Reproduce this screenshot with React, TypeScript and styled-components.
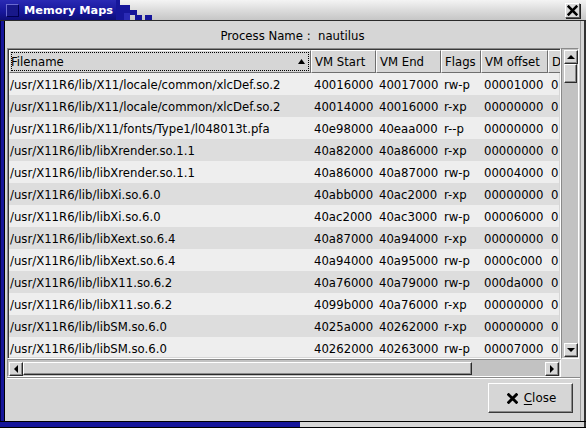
import React from "react";
import styled, { createGlobalStyle } from "styled-components";

const Global = createGlobalStyle`
  html, body { margin: 0; padding: 0; background: #d6d6d6; }
  body { font-family: "DejaVu Sans", "Noto Sans", sans-serif; font-size: 11.7px; color: #000; }
  * { box-sizing: border-box; }
`;

const BLUE = "#16169a";

const Window = styled.div`
  width: 586px;
  height: 428px;
  display: flex;
  flex-direction: column;
  overflow: hidden;
  background: #d6d6d6;
`;

const TitleBar = styled.div`
  height: 21px;
  flex: none;
  display: flex;
  align-items: stretch;
  background: linear-gradient(#f4f4f4, #dcdcdc 50%, #c6c6c6);
  border-bottom: 1px solid #2a2a2a;
`;

const TitleTab = styled.div`
  width: 116px;
  display: flex;
  align-items: center;
  gap: 5px;
  padding-left: 6px;
  background: linear-gradient(#2a2ab4, ${BLUE} 60%, #0e0e78);
`;

const WinIcon = styled.div`
  width: 13px;
  height: 13px;
  background: #18188a;
  border: 1px solid #6a6ad0;
  border-right-color: #000050;
  border-bottom-color: #000050;
`;

const TitleText = styled.span`
  color: #fff;
  font-weight: bold;
  font-size: 11.3px;
  white-space: nowrap;
`;

const Steps = styled.svg`
  flex: none;
  display: block;
`;

const CloseBox = styled.div`
  margin-left: auto;
  margin-right: 6px;
  margin-top: 3px;
  width: 15px;
  height: 15px;
  display: flex;
  align-items: center;
  justify-content: center;
  background: #dadada;
  border: 1px solid;
  border-color: #fff #555 #555 #fff;
  box-shadow: 1px 1px 0 #222;
`;

const Middle = styled.div`
  flex: 1;
  display: flex;
  min-height: 0;
`;

const LeftEdge = styled.div`
  width: 5px;
  background: ${BLUE};
  border-left: 1px solid #000040;
  border-right: 1px solid #000;
`;

const RightEdge = styled.div`
  width: 6px;
  background: #d6d6d6;
  border-left: 1px solid #9a9a9a;
  border-right: 2px solid #333;
`;

const BottomEdge = styled.div`
  height: 7px;
  flex: none;
  display: flex;
  border-top: 1px solid #000;
  border-bottom: 1px solid #000;
`;

const BottomBlue = styled.div`
  width: 300px;
  background: ${BLUE};
`;

const BottomGray = styled.div`
  flex: 1;
  background: #d6d6d6;
  border-right: 2px solid #333;
`;

const Content = styled.div`
  flex: 1;
  display: flex;
  flex-direction: column;
`;

const ProcessLine = styled.div`
  height: 27px;
  flex: none;
  display: flex;
  align-items: center;
  justify-content: center;
  padding-top: 3px;
  white-space: pre;
`;

const Scrolled = styled.div`
  margin-left: 2px;
  display: grid;
  grid-template-columns: 554px 18px;
  grid-template-rows: 311px 18px;
`;

const TreeFrame = styled.div`
  border: 1px solid;
  border-color: #8a8a8a #fff #fff #8a8a8a;
  box-shadow: inset 1px 1px 0 #3a3a3a, inset -1px -1px 0 #d6d6d6;
  padding: 1px;
  overflow: hidden;
  display: flex;
  flex-direction: column;
`;

const COLS = "302px 65px 65px 40px 67px 13px";

const HeaderRow = styled.div`
  display: grid;
  grid-template-columns: ${COLS};
  height: 23px;
  flex: none;
`;

const HeaderCell = styled.div<{ $first?: boolean }>`
  position: relative;
  display: flex;
  align-items: center;
  padding-left: ${(p) => (p.$first ? "1px" : "3px")};
  padding-right: 5px;
  background: #d6d6d6;
  border-top: 1px solid #fff;
  border-left: 1px solid #fff;
  border-right: 1px solid #6e6e6e;
  border-bottom: 1px solid #6e6e6e;
  white-space: nowrap;
  overflow: hidden;
`;

const FocusRect = styled.div`
  position: absolute;
  inset: 1px 1px 1px 1px;
  border: 1px dotted #000;
  pointer-events: none;
`;

const SortArrow = styled.svg`
  margin-left: auto;
  flex: none;
`;

const Rows = styled.div`
  flex: 1;
  overflow: hidden;
`;

const Row = styled.div<{ $odd: boolean }>`
  display: grid;
  grid-template-columns: ${COLS};
  height: 22px;
  padding-top: 2px;
  align-items: center;
  background: ${(p) => (p.$odd ? "#eeeeee" : "#dddddd")};
`;

const Cell = styled.div<{ $first?: boolean }>`
  padding-left: ${(p) => (p.$first ? "1px" : "3px")};
  white-space: nowrap;
  overflow: hidden;
`;

const VScroll = styled.div`
  display: flex;
  flex-direction: column;
  background: #c2c2c2;
  border: 1px solid;
  border-color: #8a8a8a #fff #fff #8a8a8a;
  padding: 1px 1px 1px 2px;
`;

const HScroll = styled.div`
  display: flex;
  background: #c2c2c2;
  border: 1px solid;
  border-color: #8a8a8a #fff #fff #8a8a8a;
  padding: 2px 1px 1px 1px;
`;

const ArrowBox = styled.div`
  width: 14px;
  height: 14px;
  flex: none;
  display: flex;
  align-items: center;
  justify-content: center;
  background: #d6d6d6;
  border: 1px solid;
  border-color: #fff #2a2a2a #2a2a2a #fff;
  box-shadow: inset -1px -1px 0 #8a8a8a;
`;

const VThumb = styled.div`
  height: 19px;
  flex: none;
  background: #d6d6d6;
  border: 1px solid;
  border-color: #fff #2a2a2a #2a2a2a #fff;
  box-shadow: inset -1px -1px 0 #8a8a8a;
`;

const HThumb = styled.div`
  width: 449px;
  flex: none;
  background: #d6d6d6;
  border: 1px solid;
  border-color: #fff #2a2a2a #2a2a2a #fff;
  box-shadow: inset -1px -1px 0 #8a8a8a;
`;

const Spacer = styled.div`
  flex: 1;
`;

const Corner = styled.div`
  background: #d6d6d6;
`;

const Separator = styled.div`
  margin-left: 2px;
  width: 573px;
  height: 2px;
  flex: none;
  border-top: 1px solid #8a8a8a;
  border-bottom: 1px solid #fff;
`;

const ButtonRow = styled.div`
  display: flex;
  justify-content: flex-end;
  padding: 4px 7px 0 0;
`;

const Button = styled.button`
  width: 85px;
  height: 30px;
  display: flex;
  align-items: center;
  justify-content: center;
  gap: 6px;
  padding: 0 0 0 2px;
  font: inherit;
  font-size: 11.9px;
  color: #000;
  background: #d6d6d6;
  border: 1px solid;
  border-color: #fff #3a3a3a #3a3a3a #fff;
  box-shadow: inset -1px -1px 0 #8a8a8a;
`;

const Mnemonic = styled.span`
  text-decoration: underline;
  text-underline-offset: 2px;
`;

type MapRow = [string, string, string, string, string];

const DATA: MapRow[] = [
  ["/usr/X11R6/lib/X11/locale/common/xlcDef.so.2", "40016000", "40017000", "rw-p", "00001000"],
  ["/usr/X11R6/lib/X11/locale/common/xlcDef.so.2", "40014000", "40016000", "r-xp", "00000000"],
  ["/usr/X11R6/lib/X11/fonts/Type1/l048013t.pfa", "40e98000", "40eaa000", "r--p", "00000000"],
  ["/usr/X11R6/lib/libXrender.so.1.1", "40a82000", "40a86000", "r-xp", "00000000"],
  ["/usr/X11R6/lib/libXrender.so.1.1", "40a86000", "40a87000", "rw-p", "00004000"],
  ["/usr/X11R6/lib/libXi.so.6.0", "40abb000", "40ac2000", "r-xp", "00000000"],
  ["/usr/X11R6/lib/libXi.so.6.0", "40ac2000", "40ac3000", "rw-p", "00006000"],
  ["/usr/X11R6/lib/libXext.so.6.4", "40a87000", "40a94000", "r-xp", "00000000"],
  ["/usr/X11R6/lib/libXext.so.6.4", "40a94000", "40a95000", "rw-p", "0000c000"],
  ["/usr/X11R6/lib/libX11.so.6.2", "40a76000", "40a79000", "rw-p", "000da000"],
  ["/usr/X11R6/lib/libX11.so.6.2", "4099b000", "40a76000", "r-xp", "00000000"],
  ["/usr/X11R6/lib/libSM.so.6.0", "4025a000", "40262000", "r-xp", "00000000"],
  ["/usr/X11R6/lib/libSM.so.6.0", "40262000", "40263000", "rw-p", "00007000"],
];

const Tri = ({ dir }: { dir: "up" | "down" | "left" | "right" }) => {
  const pts = {
    up: "0,5 4,1 8,5",
    down: "0,1 8,1 4,5",
    left: "5,0 5,8 1,4",
    right: "1,0 1,8 5,4",
  }[dir];
  const w = dir === "up" || dir === "down" ? 8 : 6;
  const h = dir === "up" || dir === "down" ? 6 : 8;
  return (
    <svg width={w} height={h} viewBox={`0 0 ${w} ${h}`}>
      <polygon points={pts} fill="#000" />
    </svg>
  );
};

const XIcon = ({ size, stroke }: { size: number; stroke: number }) => (
  <svg width={size} height={size} viewBox="0 0 10 10">
    <path d="M1.5 1.5 L8.5 8.5 M8.5 1.5 L1.5 8.5" stroke="#000" strokeWidth={stroke} strokeLinecap="square" />
  </svg>
);

export default function App() {
  return (
    <>
      <Global />
      <Window>
        <TitleBar>
          <TitleTab>
            <WinIcon />
            <TitleText>Memory Maps</TitleText>
          </TitleTab>
          <Steps width="42" height="20" viewBox="0 0 42 20">
            <rect x="0" y="0" width="4" height="20" fill={BLUE} />
            <rect x="4" y="5" width="10" height="8" fill={BLUE} />
            <rect x="4" y="13" width="4" height="7" fill={BLUE} />
            <rect x="14" y="10" width="7" height="5" fill={BLUE} />
            <rect x="19" y="15" width="7" height="5" fill={BLUE} />
            <rect x="29" y="15" width="7" height="5" fill={BLUE} />
            <rect x="8" y="13" width="6" height="7" fill="#2a2ab4" />
          </Steps>
          <CloseBox>
            <XIcon size={11} stroke={2.4} />
          </CloseBox>
        </TitleBar>
        <Middle>
          <LeftEdge />
          <Content>
            <ProcessLine>Process Name :  nautilus</ProcessLine>
            <Scrolled>
              <TreeFrame>
                <HeaderRow>
                  <HeaderCell $first>
                    Filename
                    <SortArrow width="7" height="5" viewBox="0 0 7 5">
                      <polygon points="0,5 3.5,0 7,5" fill="#000" />
                    </SortArrow>
                    <FocusRect />
                  </HeaderCell>
                  <HeaderCell>VM Start</HeaderCell>
                  <HeaderCell>VM End</HeaderCell>
                  <HeaderCell>Flags</HeaderCell>
                  <HeaderCell>VM offset</HeaderCell>
                  <HeaderCell>D</HeaderCell>
                </HeaderRow>
                <Rows>
                  {DATA.map((r, i) => (
                    <Row key={i} $odd={i % 2 === 0}>
                      <Cell $first>{r[0]}</Cell>
                      <Cell>{r[1]}</Cell>
                      <Cell>{r[2]}</Cell>
                      <Cell>{r[3]}</Cell>
                      <Cell>{r[4]}</Cell>
                      <Cell>0</Cell>
                    </Row>
                  ))}
                </Rows>
              </TreeFrame>
              <VScroll>
                <ArrowBox>
                  <Tri dir="up" />
                </ArrowBox>
                <VThumb />
                <Spacer />
                <ArrowBox>
                  <Tri dir="down" />
                </ArrowBox>
              </VScroll>
              <HScroll>
                <ArrowBox>
                  <Tri dir="left" />
                </ArrowBox>
                <HThumb />
                <Spacer />
                <ArrowBox>
                  <Tri dir="right" />
                </ArrowBox>
              </HScroll>
              <Corner />
            </Scrolled>
            <Separator />
            <ButtonRow>
              <Button>
                <XIcon size={11} stroke={2.6} />
                <span>
                  <Mnemonic>C</Mnemonic>lose
                </span>
              </Button>
            </ButtonRow>
          </Content>
          <RightEdge />
        </Middle>
        <BottomEdge>
          <BottomBlue />
          <BottomGray />
        </BottomEdge>
      </Window>
    </>
  );
}
